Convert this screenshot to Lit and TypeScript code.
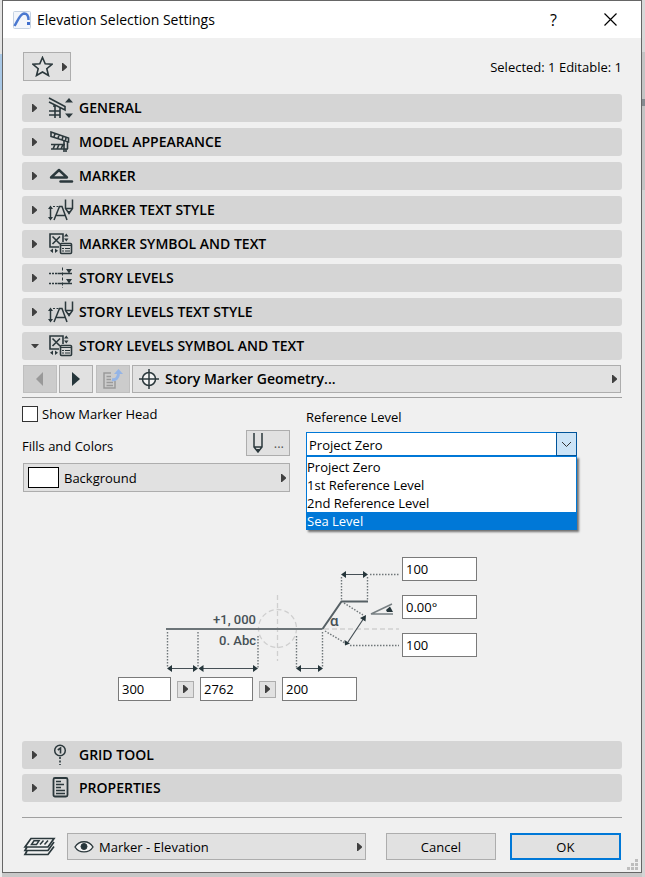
import { LitElement, html, css, svg, nothing } from "lit";
import { customElement, property, state } from "lit/decorators.js";
import { classMap } from "lit/directives/class-map.js";

const icons: Record<string, unknown> = {
  general: svg`
    <path d="M1 2L17 10.500V14L1 6M6 9V11M1 15H12M1 19H12M7 9V22M12 12V22" stroke-width="1.600"/>
    <path class="solid" d="M17 6.500L21 2L25 6.500ZM17 17.500L21 22L25 17.500Z"/>`,
  model: svg`
    <path d="M3 2L20.500 8V12L3 6.500ZM7 3.500L6 7M11 5L10 8.500M15 6.500L14 10M18 7.500L17.500 11" stroke-width="1.600"/>
    <path d="M3 14.500H17M3 19H20M5 19L7 14.500M9 19L11 14.500M13 19L15 14.500M16 11V22M19.500 12V19M18 19V22" stroke-width="1.600"/>`,
  marker: svg`
    <path d="M3 13.500L11 6L19 13.500Z" stroke-width="2.400" stroke-linejoin="round"/>
    <path d="M12.500 17.500H24" stroke-width="2.400" stroke-linecap="round"/>`,
  text: svg`
    <path d="M2.500 9V21" stroke-width="1.500"/>
    <path class="solid" d="M0 11L2.500 7.500L5 11ZM0 19L2.500 22.500L5 19Z"/>
    <path d="M5 8.500H11" stroke-dasharray="2 1.500"/>
    <path d="M6 22L11.500 8.500H14L19 22M8.500 17.500H17" stroke-width="1.500"/>
    <path d="M17.500 1.500V10.500L21 15.500L24.500 10.500V1.500M17.500 10.500H24.500" stroke-width="1.500"/>
    <path class="solid" d="M19.500 13H22.500L21 16.500Z"/>`,
  symbol: svg`
    <path d="M11 15H2V2H15V10M4.500 4.500L12 12M12 4.500L4.500 12" stroke-width="1.600"/>
    <path class="solid" d="M16 4.500L18.300 1.500L20.500 4.500ZM16 6.500L18.300 9.500L20.500 6.500ZM5 16.500L2 18.700L5 21ZM7 16.500L10 18.700L7 21Z"/>
    <rect x="12.500" y="11.500" width="11" height="10" rx="1" stroke-width="1.600"/>
    <path d="M12 13.500H24M14 16.500H16M17 16.500H22M14 19H16M17 19H22"/>`,
  levels: svg`
    <path d="M14.500 1.500V22" stroke-dasharray="3 2"/>
    <path d="M1 7.500H9M1 17.500H9" stroke-width="1.500" stroke-dasharray="2 1"/>
    <path d="M9.500 7.500H24M9.500 17.500H24" stroke-width="1.500"/>
    <path class="solid" d="M18 3H24L21 7.500ZM18 13H24L21 17.500Z"/>`,
  grid: svg`
    <circle cx="12" cy="7.500" r="5.300" stroke-width="1.500"/>
    <path d="M9.800 7L12.500 5V10.500" stroke-width="1.600"/>
    <path d="M12 14V22" stroke-width="1.600" stroke-dasharray="2 1.500"/>`,
  properties: svg`
    <rect x="5.500" y="2" width="14" height="18.500" rx="1.500" stroke-width="1.800"/>
    <path d="M8 5.500H13M8 8.500H16M8 11.500H13M8 14.500H17M8 17.500H17" stroke-width="1.400"/>`,
};

const triangle = html`<svg class="tri" width="5" height="8" viewBox="0 0 5 8" aria-hidden="true"><path d="M0 0H1L5 3.500V4.500L1 8H0Z"/></svg>`;

@customElement("section-bar")
export class SectionBar extends LitElement {
  @property() label = "";
  @property() icon = "";
  @property({ type: Boolean }) open = false;

  static styles = css`
    :host { display: block; }
    .bar {
      display: flex; align-items: center; width: 100%; height: 28px;
      box-sizing: border-box; padding: 0 7px; border: 0; border-radius: 3px;
      background: #d5d5d5; color: #000; text-align: left;
      font: 700 14px/20px "Noto Sans", "Open Sans", sans-serif;
      font-family: "Open Sans", "Noto Sans", sans-serif; font-weight: 600;
    }
    .arrow { width: 12px; height: 12px; margin-right: 7px; fill: #404040; flex: none; }
    .icon { width: 26px; height: 24px; margin-right: 5px; fill: none; stroke: #2b383c; flex: none; }
    .solid { fill: #2b383c; stroke: none; }
  `;

  render() {
    return html`<button class="bar" aria-expanded=${this.open ? "true" : "false"}>
      <svg class="arrow" viewBox="0 0 12 12" aria-hidden="true">
        <path d=${this.open ? "M2 4H10L6.500 8H5.500Z" : "M3 2H4L8 5.500V6.500L4 10H3Z"}/>
      </svg>
      <svg class="icon" viewBox="0 0 26 24" aria-hidden="true">${icons[this.icon]}</svg>
      <span>${this.label}</span>
    </button>`;
  }
}

@customElement("app-root")
export class AppRoot extends LitElement {
  @state() private level = 0;
  @state() private highlighted = 3;
  @state() private listOpen = true;

  private levels = ["Project Zero", "1st Reference Level", "2nd Reference Level", "Sea Level"];

  private sections = [
    ["GENERAL", "general"],
    ["MODEL APPEARANCE", "model"],
    ["MARKER", "marker"],
    ["MARKER TEXT STYLE", "text"],
    ["MARKER SYMBOL AND TEXT", "symbol"],
    ["STORY LEVELS", "levels"],
    ["STORY LEVELS TEXT STYLE", "text"],
    ["STORY LEVELS SYMBOL AND TEXT", "symbol"],
  ];

  static styles = css`
    :host {
      display: block; padding: 0 3px 4px 2px; color: #000;
      font: 13px/20px "Open Sans", "Noto Sans", sans-serif;
      background: linear-gradient(#e4e4e4 0 54px, #a9c8e6 54px 90px, #d0d0d0 90px 190px, #ececec 190px) left / 2px 100% no-repeat,
        linear-gradient(#d8d8d8 0 52px, #c4c4c4 52px 99px, #858b90 99px 106px, #c4c4c4 106px 190px, #d4d4d4 190px) right / 3px 100% no-repeat,
        #c8c8c8;
    }
    .dialog { position: relative; border: 1px solid #666; background: #f0f0f0; }
    button, input, select { font: inherit; color: inherit; box-sizing: border-box; margin: 0; border-radius: 0; }
    button { display: flex; align-items: center; padding: 0; background: #e1e1e1; border: 1px solid #adadad; }
    svg { flex: none; display: block; }
    .tri { fill: #404040; }
    .line { fill: none; stroke: #2b383c; }

    .titlebar { display: flex; align-items: center; height: 37px; background: #fff; padding: 0 2px 0 10px; }
    .titlebar h1 { flex: 1; margin: 0 0 0 6px; font-size: 14px; font-weight: 400; }
    .titlebar button { width: 57px; height: 37px; justify-content: center; background: none; border: 0; font-size: 16px; }

    .body { padding: 14px 19px 12px; }
    .top { display: flex; justify-content: space-between; align-items: center; margin-bottom: 13px; }
    .fav { width: 48px; height: 29px; margin-left: 1px; padding-left: 8px; gap: 9px; }
    .sections { display: grid; gap: 6px; }
    .sections.tail { gap: 5px; margin-top: 40px; }

    .tools { display: flex; gap: 2px; margin-top: 5px; padding: 0 1px 4px; border-bottom: 1px solid #a0a0a0; }
    .tools button { width: 34px; height: 28px; justify-content: center; }
    .tools button:disabled { background: #ccc; border-color: #bfbfbf; }
    .tools .sync { margin-left: 1px; }
    .tools .page { flex: 1; justify-content: flex-start; padding: 0 3px 0 6px; gap: 6px; font-size: 14px; font-weight: 600; }
    .grow { flex: 1; text-align: left; }

    .panel { display: grid; grid-template-columns: 268fr 271fr; column-gap: 16px; max-width: 555px; padding-top: 8px; }
    .check { display: flex; align-items: center; gap: 4px; height: 16px; }
    .check input { appearance: none; width: 16px; height: 16px; background: #fff; border: 1px solid #333; }
    .fills { display: flex; justify-content: space-between; align-items: flex-end; margin: 8px 0 7px; height: 26px; }
    .pen { width: 44px; height: 26px; padding: 0 5px; justify-content: space-between; color: #555; }
    .fill { width: calc(100% - 1px); height: 29px; margin-left: 1px; padding: 0 3px 0 4px; gap: 5px; }
    .swatch { width: 31px; height: 21px; box-sizing: border-box; border: 1px solid #000; background: #fff; }

    .field { display: grid; gap: 5px; align-content: start; padding-top: 1px; }
    .combo { position: relative; height: 24px; }
    .combo select { appearance: none; width: 100%; height: 24px; padding: 1px 24px 0 2px; border: 1px solid #0078d7; background: #fff; line-height: 20px; }
    .drop { position: absolute; right: 0; top: 0; width: 21px; height: 24px; box-sizing: border-box; border: 1px solid #00549a; background: #cce4f7; display: grid; place-items: center; pointer-events: none; }
    .list { position: absolute; z-index: 1; left: 0; right: 0; top: 24px; margin: 0; padding: 1px 0 0; list-style: none; border: 1px solid #0078d7; border-bottom: 0; background: #fff; box-shadow: 2px 2px 2px #0008; }
    .option { height: 18px; line-height: 18px; }
    .option.on { background: #0078d7; color: #fff; }

    .geometry { margin: 65px 0 0 96px; }
    .sketch { display: flex; }
    .side { display: grid; gap: 14px; align-content: start; }
    .num { width: 75px; height: 24px; padding: 0 3px; border: 1px solid #7a7a7a; background: #fff; }
    .num.small { width: 53px; }
    .row { display: flex; align-items: center; gap: 6px; }
    .row button { width: 17px; height: 17px; justify-content: center; }
    .faint { fill: none; stroke: #cfcfcf; stroke-width: 1.3; stroke-dasharray: 5 3; }
    .dots { fill: none; stroke: #6f7679; stroke-width: 1.4; stroke-dasharray: 1.5 1.5; }
    .heads { fill: #26363b; }
    .caption { font: 500 13px Roboto, sans-serif; fill: #465056; }
    .caption.angle { font-size: 15px; }

    .footer { display: flex; align-items: center; margin-top: 15px; padding-top: 15px; border-top: 1px solid #a0a0a0; }
    .footer button { height: 27px; justify-content: center; }
    .footer .layer { flex: 298; margin: 0 20px 0 10px; padding: 0 3px 0 6px; gap: 5px; }
    .footer .action { flex: 111; }
    .footer .ok { margin: 0 1px 0 14px; border: 2px solid #0078d7; }
    .grip { position: absolute; right: 3px; bottom: 2px; fill: #bdbdbd; }
  `;

  private get diagram() {
    return html`<svg width="284" height="120" viewBox="118 557 284 120" role="img" aria-label="Story marker geometry">
      <path class="faint" d="M277.500 595V661M324 629H399"/>
      <circle class="faint" cx="277.500" cy="628.500" r="19"/>
      <path class="dots" d="M167.500 632V668M198 632V668M258 636V668M296.500 636V668M322.500 632V668M341.500 577V601M367.500 577V601M370 574.500H399M344 603L363 615M325 631L345 643M350 645.500H399"/>
      <path d="M166 629H322.500" fill="none" stroke="#6c7478" stroke-width="2"/>
      <path d="M322.500 629L341.500 601.500H368" fill="none" stroke="#566065" stroke-width="2"/>
      <path d="M169 668.500H196M200 668.500H256M298 668.500H321M343 574.500H366M348 642L364 618" fill="none" stroke="#465056" stroke-width="1.200"/>
      <path class="heads" d="M167 668.500l5-3.500v7zM198 668.500l-5-3.500v7zM198.500 668.500l5-3.500v7zM258 668.500l-5-3.500v7zM296 668.500l5-3.500v7zM323 668.500l-5-3.500v7zM341 574.500l5-3.500v7zM368 574.500l-5-3.500v7zM366 615L360 618L365.500 621.500ZM345 645.500L344.500 640L350 643.500Z"/>
      <path d="M393 614H371L392 604" fill="none" stroke="#777f82" stroke-width="1.400"/>
      <path class="heads" d="M386 610L390 606.500L393 612H387Z"/>
      <text class="caption" x="256" y="624" text-anchor="end">+1, 000</text>
      <text class="caption" x="256" y="645" text-anchor="end">0. Abc</text>
      <text class="caption angle" x="330" y="626">α</text>
    </svg>`;
  }

  render() {
    return html`<main class="dialog">
      <header class="titlebar">
        <svg width="18" height="18" viewBox="0 0 18 18" aria-hidden="true">
          <rect x=".500" y=".500" width="17" height="17" rx="1" fill="#f3f6fb" stroke="#c5d2e2"/>
          <path d="M1.500 15C5 9 7 3 11 2.500C14.500 2.500 15.500 5 15.500 9" fill="none" stroke="#4a78d0" stroke-width="2.400"/>
          <rect x="14" y="11" width="3" height="3" fill="#3f6fce"/>
        </svg>
        <h1>Elevation Selection Settings</h1>
        <button aria-label="Help">?</button>
        <button aria-label="Close"><svg width="13" height="13" viewBox="0 0 13 13"><path d="M.500 .500L12.500 12.500M12.500 .500L.500 12.500" stroke="#000" stroke-width="1.200"/></svg></button>
      </header>
      <div class="body">
        <div class="top">
          <button class="fav" aria-label="Favorites">
            <svg class="line" width="21" height="21" viewBox="0 0 21 21"><path d="M10.500 1.500L13.200 7.800L20 8.300L14.800 12.700L16.500 19.500L10.500 16L4.500 19.500L6.200 12.700L1 8.300L7.800 7.800Z" stroke-width="1.600"/></svg>
            ${triangle}
          </button>
          <span>Selected: 1 Editable: 1</span>
        </div>
        <div class="sections">
          ${this.sections.map(([label, icon], i) => html`<section-bar label=${label} icon=${icon} ?open=${i === 7}></section-bar>`)}
        </div>
        <div class="tools">
          <button disabled aria-label="Previous page"><svg width="8" height="14" viewBox="0 0 8 14"><path d="M7 0V14L0 7Z" fill="#999"/></svg></button>
          <button aria-label="Next page"><svg width="8" height="14" viewBox="0 0 8 14"><path d="M0 0L8 7L0 14Z" fill="#26363b"/></svg></button>
          <button class="sync" disabled aria-label="Transfer settings">
            <svg width="22" height="22" viewBox="0 0 22 22" fill="none">
              <path d="M9 5H2V20H13V13M4.500 8.500H9M4.500 11.500H9M4.500 14.500H11M4.500 17.500H11" stroke="#9a9a9a" stroke-width="1.500"/>
              <path d="M10 11.500C14 12.500 16 9.500 16.500 6" stroke="#94b4e6" stroke-width="3"/>
              <path d="M12 6L16.500 1L21 6Z" fill="#94b4e6"/>
            </svg>
          </button>
          <button class="page">
            <svg class="line" width="20" height="20" viewBox="0 0 20 20"><circle cx="10" cy="10" r="6.500" fill="#f4f4f4" stroke-width="1.500"/><path d="M10 0V20M0 10H20" stroke-width="1.500"/></svg>
            <span class="grow">Story Marker Geometry...</span>${triangle}
          </button>
        </div>
        <div class="panel">
          <div>
            <label class="check"><input type="checkbox">Show Marker Head</label>
            <div class="fills">
              <span>Fills and Colors</span>
              <button class="pen" aria-label="Pen">
                <svg class="line" width="12" height="20" viewBox="0 0 12 20"><path d="M2 0V14L6 19L10 14V0M2 14H10" stroke-width="1.500"/><path d="M4.500 16.500H7.500L6 19Z" fill="#2b383c"/></svg>
                <span>...</span>
              </button>
            </div>
            <button class="fill"><span class="swatch"></span><span class="grow">Background</span>${triangle}</button>
          </div>
          <div class="field">
            <label for="ref">Reference Level</label>
            <div class="combo">
              <select id="ref" .selectedIndex=${this.level}
                @mousedown=${(e: Event) => { e.preventDefault(); this.listOpen = !this.listOpen; }}>
                ${this.levels.map((l, i) => html`<option ?selected=${i === this.level}>${l}</option>`)}
              </select>
              <span class="drop"><svg width="11" height="7" viewBox="0 0 11 7"><path d="M1 1L5.500 5.500L10 1" fill="none" stroke="#333"/></svg></span>
              ${this.listOpen
                ? html`<ul class="list" role="listbox" aria-label="Reference Level">
                    ${this.levels.map((l, i) => html`<li role="option" aria-selected=${i === this.highlighted ? "true" : "false"}
                      class=${classMap({ option: true, on: i === this.highlighted })}
                      @mouseenter=${() => { this.highlighted = i; }}
                      @click=${() => { this.level = i; this.listOpen = false; }}>${l}</li>`)}
                  </ul>`
                : nothing}
            </div>
          </div>
        </div>
        <div class="geometry">
          <div class="sketch">
            ${this.diagram}
            <div class="side">
              <input class="num" aria-label="End length" value="100">
              <input class="num" aria-label="Angle" value="0.00°">
              <input class="num" aria-label="Break length" value="100">
            </div>
          </div>
          <div class="row">
            <input class="num small" aria-label="Start offset" value="300">
            <button aria-label="Start offset options">${triangle}</button>
            <input class="num small" aria-label="Text width" value="2762">
            <button aria-label="Text width options">${triangle}</button>
            <input class="num" aria-label="Line extension" value="200">
          </div>
        </div>
        <div class="sections tail">
          <section-bar label="GRID TOOL" icon="grid"></section-bar>
          <section-bar label="PROPERTIES" icon="properties"></section-bar>
        </div>
        <footer class="footer">
          <svg class="line" width="35" height="20" viewBox="0 0 35 20" aria-hidden="true">
            <path d="M9 1.500H32L26 10H3Z" stroke-width="1.700"/>
            <path d="M5 10L3 13.500H26L32 5M5 14L3 17.500H26L32 9.500" stroke-width="1.700"/>
            <path d="M12 3.800H17L14.500 7.500H9.500ZM18 7.500L21.500 3.500M22.500 7.500L26 3.500" stroke-width="1.500"/>
          </svg>
          <button class="layer">
            <svg class="line" width="20" height="14" viewBox="0 0 20 14"><path d="M1 7C5 0 15 0 19 7C15 13.500 5 13.500 1 7Z" stroke-width="1.400" fill="#f4f4f4"/><circle cx="10" cy="6.500" r="3" fill="#26363b"/></svg>
            <span class="grow">Marker - Elevation</span>${triangle}
          </button>
          <button class="action">Cancel</button>
          <button class="action ok">OK</button>
        </footer>
      </div>
      <svg class="grip" width="11" height="11" viewBox="0 0 11 11" aria-hidden="true"><path d="M8 0h3v3h-3zM4 4h3v3h-3zM8 4h3v3h-3zM0 8h3v3h-3zM4 8h3v3h-3zM8 8h3v3h-3z"/></svg>
    </main>`;
  }
}
